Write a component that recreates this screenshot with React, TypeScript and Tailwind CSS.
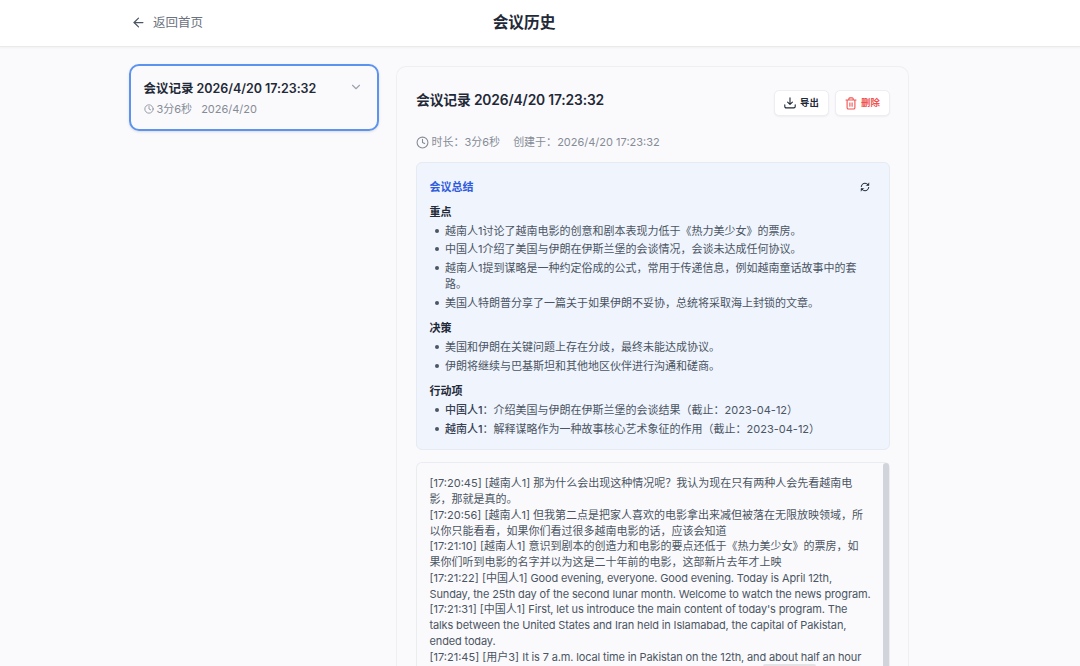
import type { ReactNode } from "react";
import { ArrowLeft, ChevronDown, Clock } from "lucide-react";

interface ActionItem {
  owner: string;
  text: string;
}

interface TranscriptLine {
  time: string;
  speaker: string;
  text: string;
  latin?: boolean;
}

const RECORD = {
  title: "会议记录 2026/4/20 17:23:32",
  duration: "3分6秒",
  date: "2026/4/20",
  createdAt: "2026/4/20 17:23:32",
};

const KEY_POINTS = [
  "越南人1讨论了越南电影的创意和剧本表现力低于《热力美少女》的票房。",
  "中国人1介绍了美国与伊朗在伊斯兰堡的会谈情况，会谈未达成任何协议。",
  "越南人1提到谋略是一种约定俗成的公式，常用于传递信息，例如越南童话故事中的套路。",
  "美国人特朗普分享了一篇关于如果伊朗不妥协，总统将采取海上封锁的文章。",
];

const DECISIONS = [
  "美国和伊朗在关键问题上存在分歧，最终未能达成协议。",
  "伊朗将继续与巴基斯坦和其他地区伙伴进行沟通和磋商。",
];

const ACTIONS: ActionItem[] = [
  { owner: "中国人1", text: "介绍美国与伊朗在伊斯兰堡的会谈结果（截止：2023-04-12）" },
  { owner: "越南人1", text: "解释谋略作为一种故事核心艺术象征的作用（截止：2023-04-12）" },
];

const TRANSCRIPT: TranscriptLine[] = [
  { time: "17:20:45", speaker: "越南人1", text: "那为什么会出现这种情况呢？我认为现在只有两种人会先看越南电影，那就是真的。" },
  { time: "17:20:56", speaker: "越南人1", text: "但我第二点是把家人喜欢的电影拿出来减但被落在无限放映领域，所以你只能看看，如果你们看过很多越南电影的话，应该会知道" },
  { time: "17:21:10", speaker: "越南人1", text: "意识到剧本的创造力和电影的要点还低于《热力美少女》的票房，如果你们听到电影的名字并以为这是二十年前的电影，这部新片去年才上映" },
  { time: "17:21:22", speaker: "中国人1", text: "Good evening, everyone. Good evening. Today is April 12th, Sunday, the 25th day of the second lunar month. Welcome to watch the news program.", latin: true },
  { time: "17:21:31", speaker: "中国人1", text: "First, let us introduce the main content of today's program. The talks between the United States and Iran held in Islamabad, the capital of Pakistan, ended today.", latin: true },
  { time: "17:21:45", speaker: "用户3", text: "It is 7 a.m. local time in Pakistan on the 12th, and about half an hour", latin: true },
];

function DownloadIcon() {
  return (
    <svg viewBox="0 0 12 12" className="size-[12px]" fill="none" stroke="currentColor" strokeWidth="1.1" strokeLinecap="round" strokeLinejoin="round">
      <path d="M6 0.9v6.4M3.6 5.1 6 7.4l2.4-2.3M0.8 7.7v1.9a1.3 1.3 0 0 0 1.3 1.3h7.8a1.3 1.3 0 0 0 1.3-1.3V7.7" />
    </svg>
  );
}

function TrashIcon() {
  return (
    <svg viewBox="0 0 12 13" className="h-[13px] w-[12px]" fill="none" stroke="currentColor" strokeWidth="1.1" strokeLinecap="round" strokeLinejoin="round">
      <path d="M1 3h10M3.8 3V1.9a1 1 0 0 1 1-1h2.4a1 1 0 0 1 1 1V3M2.1 3v7.7a1.3 1.3 0 0 0 1.3 1.3h5.2a1.3 1.3 0 0 0 1.3-1.3V3M4.9 5.9v3.3M7.1 5.9v3.3" />
    </svg>
  );
}

function RefreshIcon() {
  return (
    <svg viewBox="0 0 10 10" className="size-[10px] text-[#1f2937]" fill="none" stroke="currentColor" strokeWidth="1" strokeLinecap="round" strokeLinejoin="round">
      <path d="M1.2 4.6a3.8 3.8 0 0 1 6.9-1.8M8.8 5.4a3.8 3.8 0 0 1-6.9 1.8" />
      <path d="M8.9 1.2v2.3H6.6ZM1.1 8.8V6.5h2.3Z" fill="currentColor" strokeWidth="0.5" />
    </svg>
  );
}

function Header() {
  return (
    <header className="relative z-10 h-[47px] shrink-0 border-b border-[#e9eaec] bg-white shadow-[0_1px_2px_rgba(0,0,0,0.04)]">
      <div className="mx-auto grid h-[45px] w-[822px] grid-cols-[1fr_auto_1fr] items-center">
        <button type="button" className="ml-[2px] flex items-center gap-[7px] justify-self-start text-[12.5px] text-[#6b7280]">
          <ArrowLeft className="size-[15px] text-[#4b5563]" strokeWidth={2} />
          <span className="pt-px">返回首页</span>
        </button>
        <h1 className="-translate-x-[16px] text-[15.7px] font-semibold text-[#1f2937]">会议历史</h1>
      </div>
    </header>
  );
}

function RecordCard() {
  return (
    <article className="flex h-[67px] w-[250px] shrink-0 justify-between rounded-[10px] border-2 border-[#5b93ee] pt-[13px] pr-[14px] pl-[12.5px] shadow-sm">
      <div>
        <h2 className="text-[12.5px] leading-[19px] font-semibold tracking-[-0.03px] text-[#1f2937]">{RECORD.title}</h2>
        <p className="mt-[3px] flex items-center text-[11px] leading-[16px] text-[#868c97]">
          <Clock className="mr-[3px] size-[10px]" />
          <span className="mr-[9px]">{RECORD.duration}</span>
          <span>{RECORD.date}</span>
        </p>
      </div>
      <ChevronDown className="mt-px size-[14px] text-[#9ca3af]" />
    </article>
  );
}

function Section({ title, children }: { title: string; children: ReactNode }) {
  return (
    <section>
      <h4 className="text-[11px] leading-[15.75px] font-semibold text-[#1f2937]">{title}</h4>
      <ul className="mt-[3px] space-y-[3.15px] text-[11px] leading-[15.75px] text-[#4b5563]">{children}</ul>
    </section>
  );
}

function Bullet({ children }: { children: ReactNode }) {
  return (
    <li className="flex pl-[5.5px]">
      <span className="mt-[5px] mr-[6px] size-[4px] shrink-0 rounded-full bg-[#4b5563]" />
      <span>{children}</span>
    </li>
  );
}

function Summary() {
  return (
    <div className="h-[288px] shrink-0 rounded-[6px] border border-[#e6eaf2] bg-[#eff4fd] px-[12.5px] pt-[15px]">
      <div className="flex h-[18px] items-center justify-between pr-[6.5px]">
        <h3 className="text-[11px] font-semibold text-[#2f5bdc]">会议总结</h3>
        <RefreshIcon />
      </div>
      <div className="mt-[8.8px] space-y-[9.4px]">
        <Section title="重点">
          {KEY_POINTS.map((point) => (
            <Bullet key={point}>{point}</Bullet>
          ))}
        </Section>
        <Section title="决策">
          {DECISIONS.map((decision) => (
            <Bullet key={decision}>{decision}</Bullet>
          ))}
        </Section>
        <Section title="行动项">
          {ACTIONS.map((action) => (
            <Bullet key={action.owner}>
              <span className="font-medium text-[#374151]">{action.owner}</span>
              {`：${action.text}`}
            </Bullet>
          ))}
        </Section>
      </div>
    </div>
  );
}

function Transcript() {
  return (
    <div className="relative mt-3 flex-1 rounded-t-[6px] border border-b-0 border-[#ebecef] pt-[13.4px] pr-[18px] pl-[12.5px] text-[11px] leading-[15.75px] text-[#4b5563]">
      {TRANSCRIPT.map((line) => (
        <p key={line.time} className={line.latin ? "" : "pr-1"}>
          [{line.time}] [{line.speaker}] <span className={line.latin ? "tracking-[-0.14px]" : ""}>{line.text}</span>
        </p>
      ))}
      <div className="absolute top-0 right-0 bottom-0 w-[6px] rounded-t-full bg-[#d1d5db]" />
    </div>
  );
}

function RecordDetail() {
  return (
    <main className="flex h-[620px] w-[513px] shrink-0 flex-col rounded-t-[10px] border border-b-0 border-[#eeeff2] pt-[23px] pr-[18px] pl-[19px]">
      <div className="flex h-[26px] items-center justify-between">
        <h2 className="-mt-[6px] text-[13.8px] font-semibold tracking-[-0.15px] text-[#1f2937]">{RECORD.title}</h2>
        <div className="flex gap-[6px] text-[9.4px] font-semibold">
          <button type="button" className="flex h-[26px] w-[55px] items-center justify-center gap-1 rounded-[5px] border border-[#eceef1] bg-white text-[#1f2937] shadow-xs">
            <DownloadIcon />
            导出
          </button>
          <button type="button" className="flex h-[26px] w-[55px] items-center justify-center gap-1 rounded-[5px] border border-[#eceef1] bg-white text-[#ef5350] shadow-xs">
            <TrashIcon />
            删除
          </button>
        </div>
      </div>
      <p className="mt-[18px] mb-[12px] flex h-[16px] items-center text-[11px] text-[#868c97]">
        <Clock className="mr-[3px] -ml-[0.5px] size-[13px]" />
        <span className="mr-[13px]">时长：{RECORD.duration}</span>
        <span>创建于：{RECORD.createdAt}</span>
      </p>
      <Summary />
      <Transcript />
    </main>
  );
}

export default function App() {
  return (
    <div className="relative flex h-[666px] w-[1080px] flex-col overflow-hidden bg-[#fafafc] font-[Inter,'Noto_Sans_CJK_SC',sans-serif]">
      <Header />
      <div className="flex items-start gap-[17px] pt-[19px] pl-[129px]">
        <div className="-mt-[2px]">
          <RecordCard />
        </div>
        <RecordDetail />
      </div>
      <div className="absolute bottom-0 left-[763px] h-[2px] w-[53px] rounded-t-sm bg-[#e3e3e5]" />
    </div>
  );
}
